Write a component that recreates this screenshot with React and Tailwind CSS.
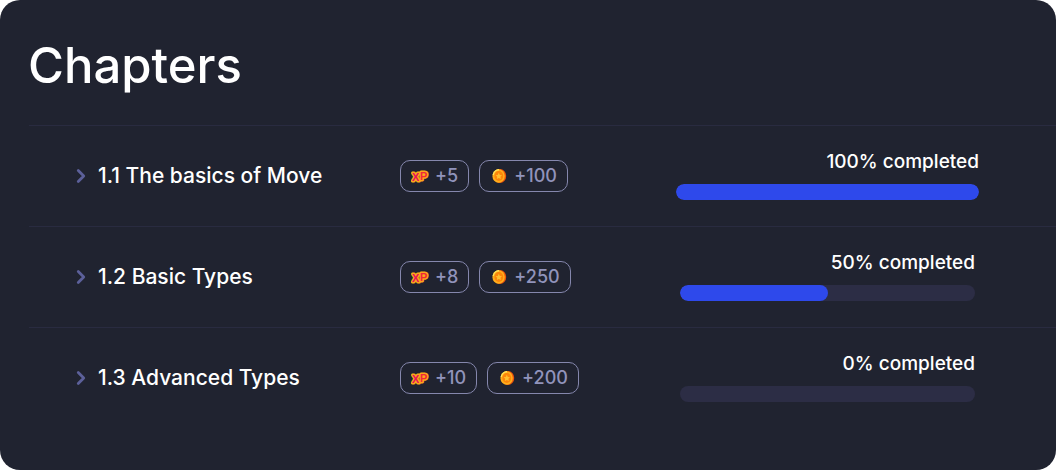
import React from 'react';
import { ChevronRight } from 'lucide-react';

const chapters = [
  { id: '1.1', title: 'The basics of Move', xp: 5, coins: 100, progress: 100 },
  { id: '1.2', title: 'Basic Types', xp: 8, coins: 250, progress: 50 },
  { id: '1.3', title: 'Advanced Types', xp: 10, coins: 200, progress: 0 },
];

function XpIcon() {
  return (
    <svg width="18" height="14" viewBox="0 0 18 14" aria-hidden="true">
      <g
        fontFamily="'Liberation Sans', sans-serif"
        fontWeight="700"
        fontSize="11"
        strokeLinejoin="round"
        paintOrder="stroke"
        strokeWidth="3"
      >
        <text x="1" y="12" stroke="#fba71a" fill="#e80f5c">X</text>
        <text x="9" y="11" stroke="#fba71a" fill="#f0283c">P</text>
      </g>
    </svg>
  );
}

function CoinIcon() {
  return (
    <svg width="18" height="18" viewBox="0 0 18 18" aria-hidden="true">
      <ellipse cx="9.8" cy="9" rx="6.4" ry="7" fill="#f0560b" />
      <ellipse cx="8.6" cy="9" rx="6.2" ry="6.8" fill="#ffae1c" />
      <path d="M3.2 8A5.6 6.2 0 0 1 9 2.8" fill="none" stroke="#ffe65e" strokeWidth="1.4" />
      <ellipse cx="8.8" cy="9" rx="4.4" ry="5" fill="#fc860a" />
      <path d="M8.8 5.8l1 2.1 2.2.3-1.6 1.6.4 2.3-2-1.1-2 1.1.4-2.3-1.6-1.6 2.2-.3z" fill="#ffc030" />
    </svg>
  );
}

function Reward({ icon, amount }) {
  return (
    <span className="flex h-8 items-center gap-[6px] rounded-[10px] border border-[#8587ad] px-[10px] text-[18px] font-medium leading-6 text-[#9193bb]">
      {icon}
      <span>+{amount}</span>
    </span>
  );
}

function ProgressBar({ value, label }) {
  const done = value === 100;

  return (
    <div className={done ? 'w-[303px]' : 'w-[295px]'}>
      <p className="mb-2 text-right text-[19px] font-medium leading-7 text-white">{value}% completed</p>
      <div
        role="progressbar"
        aria-label={label}
        aria-valuenow={value}
        className="h-4 overflow-hidden rounded-full bg-[#2c2d45]"
      >
        <div className="h-full rounded-full bg-[#2e49eb]" style={{ width: `${value}%` }} />
      </div>
    </div>
  );
}

function ChapterRow({ chapter }) {
  return (
    <li className="grid h-[101px] grid-cols-[371px_1fr_303px] items-center border-t border-[#292b40] pr-[77px]">
      <button type="button" className="flex items-center gap-[6px] pl-[41px] text-left text-[21px] font-medium leading-8 text-white">
        <ChevronRight size={22} strokeWidth={3} className="shrink-0 text-[#5c609a]" />
        <span>{chapter.id} {chapter.title}</span>
      </button>
      <div className="flex gap-[10px]">
        <Reward icon={<XpIcon />} amount={chapter.xp} />
        <Reward icon={<CoinIcon />} amount={chapter.coins} />
      </div>
      <div className="flex justify-center pb-1">
        <ProgressBar value={chapter.progress} label={chapter.title} />
      </div>
    </li>
  );
}

export default function App() {
  return (
    <div className="bg-white pr-px font-['Inter',sans-serif]">
      <section className="rounded-[20px] bg-[#202330] pb-[42px] pl-[28px] pt-8">
        <h1 className="mb-[25px] text-[49px] font-medium leading-[68px] text-white">Chapters</h1>
        <ul className="pl-px">
          {chapters.map(chapter => (
            <ChapterRow key={chapter.id} chapter={chapter} />
          ))}
        </ul>
      </section>
    </div>
  );
}
